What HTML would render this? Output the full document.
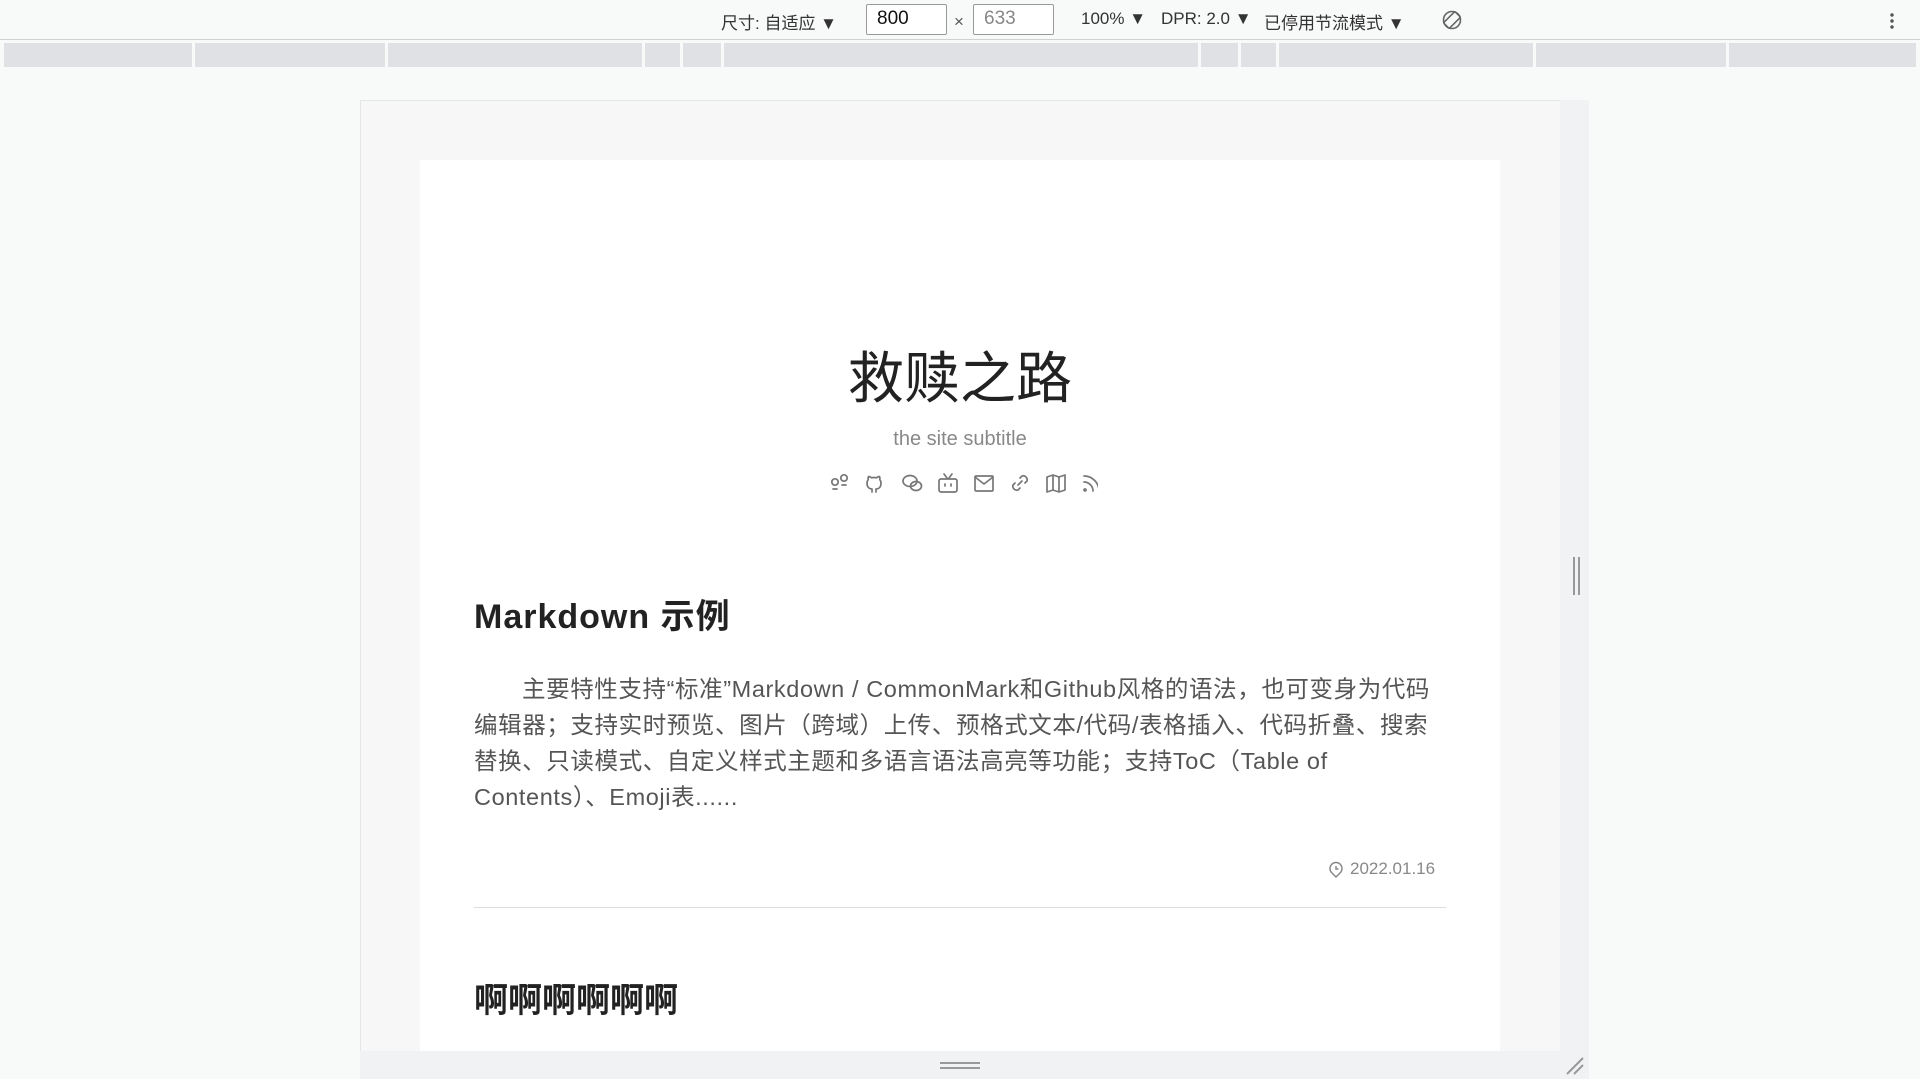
<!DOCTYPE html>
<html><head><meta charset="utf-8"><style>
*{margin:0;padding:0;box-sizing:border-box}
body{width:1920px;height:1079px;overflow:hidden;background:#f8f9f9;font-family:"Liberation Sans","Noto Sans CJK SC",sans-serif;position:relative;color:#333}
.abs{position:absolute}
.tb{top:0;left:0;width:1920px;height:40px;background:#f8f9f9;border-bottom:1px solid #d0d0d0}
.tt{font-size:17px;color:#333;top:9px;white-space:nowrap}
.inp{top:4px;height:31px;border:1px solid #999;background:#fff;font-size:19px;padding:3px 10px;border-radius:2px}
.ruler{top:43px;left:4px;width:1912px;height:24px;background:#dfe1e5}
.sep{top:43px;width:3px;height:24px;background:#f8f9f9}
.frame{left:360px;top:100px;width:1200px;height:951px;background:#f7f7f8;border-top:1px solid #e6e6e6;border-left:1px solid #e6e6e6}
.card{left:420px;top:160px;width:1080px;height:891px;background:#fff}
.p{left:474px;font-size:23.5px;color:#555;white-space:nowrap;letter-spacing:0.6px}
</style></head><body>
<div class="abs tb"></div>
<div class="abs tt" style="left:721px">尺寸: 自适应 ▼</div>
<div class="abs inp" style="left:866px;width:81px;color:#111">800</div>
<div class="abs tt" style="left:954px;top:12px;color:#555">×</div>
<div class="abs inp" style="left:973px;width:81px;color:#888">633</div>
<div class="abs tt" style="left:1081px">100% ▼</div>
<div class="abs tt" style="left:1161px">DPR: 2.0 ▼</div>
<div class="abs tt" style="left:1264px">已停用节流模式 ▼</div>
<svg class="abs" style="left:1441px;top:9px" width="22" height="22" viewBox="0 0 22 22" fill="none" stroke="#666" stroke-width="1.6"><circle cx="11" cy="11" r="8.5"/><rect x="7" y="3" width="8" height="16" rx="1" transform="rotate(45 11 11)"/></svg>
<div class="abs" style="left:1890px;top:12px;width:4px;height:18px;background:radial-gradient(circle,#555 1.5px,transparent 2px) 0 0/4px 6px"></div>
<div class="abs ruler"></div>
<div class="abs sep" style="left:192px"></div><div class="abs sep" style="left:385px"></div><div class="abs sep" style="left:642px"></div><div class="abs sep" style="left:680px"></div><div class="abs sep" style="left:721px"></div><div class="abs sep" style="left:1198px"></div><div class="abs sep" style="left:1238px"></div><div class="abs sep" style="left:1276px"></div><div class="abs sep" style="left:1533px"></div><div class="abs sep" style="left:1726px"></div>
<div class="abs frame"></div>
<div class="abs" style="left:1560px;top:100px;width:29px;height:951px;background:#f1f2f4"></div>
<div class="abs" style="left:360px;top:1051px;width:1229px;height:28px;background:#f1f2f4"></div>
<div class="abs" style="left:1573px;top:557px;width:2px;height:38px;background:#999"></div>
<div class="abs" style="left:1578px;top:557px;width:2px;height:38px;background:#999"></div>
<div class="abs" style="left:940px;top:1062px;width:40px;height:2px;background:#999"></div>
<div class="abs" style="left:940px;top:1067px;width:40px;height:2px;background:#999"></div>
<svg class="abs" style="left:1564px;top:1054px" width="22" height="22" stroke="#999" stroke-width="2"><line x1="3" y1="20" x2="19" y2="4"/><line x1="10" y1="20" x2="19" y2="11"/></svg>
<div class="abs card"></div>
<div class="abs" style="left:420px;width:1080px;top:340px;text-align:center;font-size:56px;color:#222;font-family:'Noto Sans CJK SC',sans-serif;line-height:70px">救赎之路</div>
<div class="abs" style="left:420px;width:1080px;top:428px;text-align:center;font-size:20px;color:#888">the site subtitle</div>
<svg class="abs" style="left:828px;top:471px" width="270" height="24" viewBox="0 0 270 24" fill="none" stroke="#777" stroke-width="1.7" stroke-linecap="round" stroke-linejoin="round">
<g transform="translate(2,2)"><circle cx="5" cy="9" r="3.2"/><circle cx="14" cy="5" r="3.2"/><path d="M3 16h4M12 12h4"/></g>
<g transform="translate(38,2)"><path d="M6 19v-3c-3 0-5-2-5-6 0-1.5.5-2.5 1.2-3.3-.2-1-.1-2.3.3-3.2 1.2 0 2.3.7 3 1.3a10 10 0 0 1 5 0c.7-.6 1.800-1.3 3-1.3.4.9.5 2.2.3 3.2.7.8 1.2 1.8 1.2 3.3 0 4-2 6-5 6v3"/></g>
<g transform="translate(74,2)"><ellipse cx="8" cy="8" rx="7" ry="5.5"/><ellipse cx="14" cy="13" rx="5.5" ry="4.5"/></g>
<g transform="translate(110,2)"><rect x="1" y="6" width="18" height="13" rx="2"/><path d="M6 1l3 4M14 1l-3 4M7 11v2M13 11v2"/></g>
<g transform="translate(146,3)"><rect x="1" y="2" width="18" height="15" rx="1"/><path d="M1 3l9 7 9-7"/></g>
<g transform="translate(182,2)"><path d="M8 12l4-4M10 5l2-2a4 4 0 0 1 5 5l-2 2M10 15l-2 2a4 4 0 0 1-5-5l2-2"/></g>
<g transform="translate(218,2)"><path d="M1 4l6-2 6 2 6-2v15l-6 2-6-2-6 2zM7 2v15M13 4v15"/></g>
<g transform="translate(254,2)"><path d="M2 3a15 15 0 0 1 15 15M2 9a9 9 0 0 1 9 9"/><circle cx="3" cy="17" r="1"/></g>
</svg>
<div class="abs" style="left:474px;top:589px;font-size:34px;font-weight:bold;color:#222;white-space:nowrap;letter-spacing:1px">Markdown 示例</div>
<div class="abs p" style="top:670px;left:522px">主要特性支持“标准”Markdown / CommonMark和Github风格的语法，也可变身为代码</div>
<div class="abs p" style="top:706px">编辑器；支持实时预览、图片（跨域）上传、预格式文本/代码/表格插入、代码折叠、搜索</div>
<div class="abs p" style="top:742px">替换、只读模式、自定义样式主题和多语言语法高亮等功能；支持ToC（Table of</div>
<div class="abs p" style="top:778px">Contents）、Emoji表......</div>
<svg class="abs" style="left:1328px;top:861px" width="16" height="18" fill="none" stroke="#888" stroke-width="1.5"><path d="M8 16l-4-4a6 6 0 1 1 8 0z"/><path d="M8 5v3h2.5"/></svg>
<div class="abs" style="left:1350px;top:859px;font-size:17px;color:#888">2022.01.16</div>
<div class="abs" style="left:474px;top:907px;width:972px;height:1px;background:#ddd"></div>
<div class="abs" style="left:474px;top:973px;font-size:34px;font-weight:bold;color:#222;white-space:nowrap">啊啊啊啊啊啊</div>
</body></html>
